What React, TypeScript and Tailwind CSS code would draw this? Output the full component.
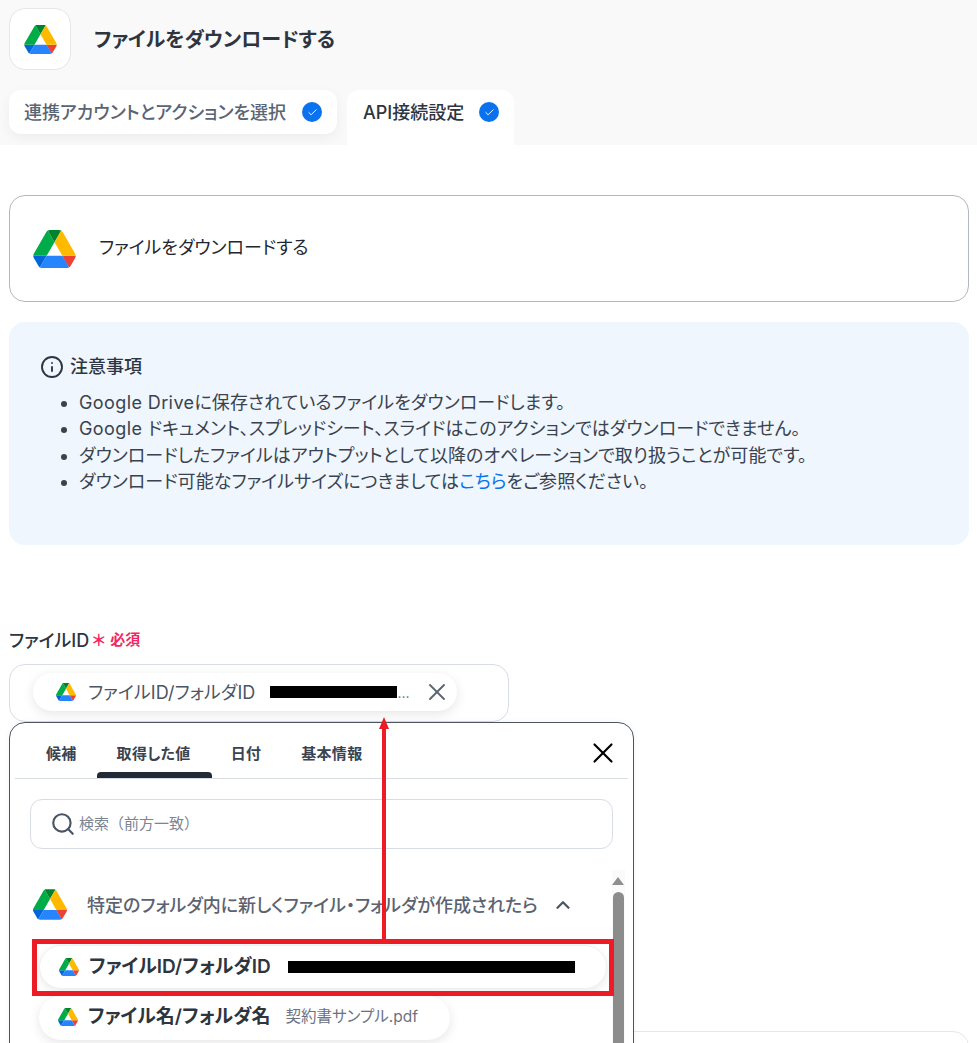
import { Check, ChevronUp, Info, Search, X } from 'lucide-react';

const FONT = "font-['Inter','Noto_Sans_CJK_JP',sans-serif] [font-feature-settings:'palt']";

function DriveIcon({ className }: { className: string }) {
  return (
    <svg viewBox="0 0 87.3 78" className={className}>
      <path d="m6.6 66.85 3.85 6.65c.8 1.4 1.95 2.5 3.3 3.3l13.75-23.8h-27.5c0 1.55.4 3.1 1.2 4.5z" fill="#0066da" />
      <path d="m43.65 25-13.75-23.8c-1.35.8-2.5 1.9-3.3 3.3l-25.4 44a9.06 9.06 0 0 0 -1.2 4.5h27.5z" fill="#00ac47" />
      <path d="m73.55 76.8c1.35-.8 2.5-1.9 3.3-3.3l1.6-2.75 7.65-13.25c.8-1.4 1.2-2.95 1.2-4.5h-27.502l5.852 11.5z" fill="#ea4335" />
      <path d="m43.65 25 13.75-23.8c-1.35-.8-2.9-1.2-4.5-1.2h-18.5c-1.6 0-3.15.45-4.5 1.2z" fill="#00832d" />
      <path d="m59.8 53h-32.3l-13.75 23.8c1.35.8 2.9 1.2 4.5 1.2h50.8c1.6 0 3.15-.45 4.5-1.2z" fill="#2684fc" />
      <path d="m73.4 26.5-12.7-22c-.8-1.4-1.95-2.5-3.3-3.3l-13.75 23.8 16.15 28h27.45c0-1.55-.4-3.1-1.2-4.5z" fill="#ffba00" />
    </svg>
  );
}

function DoneBadge() {
  return (
    <span className="flex h-5 w-5 items-center justify-center rounded-full bg-[#0a72ee]">
      <Check size={11} strokeWidth={2} className="text-white" />
    </span>
  );
}

export default function App() {
  return (
    <div className={`relative h-[1043px] w-[977px] overflow-hidden bg-white ${FONT} text-[#2d3540]`}>
      {/* Header */}
      <header className="h-[145px] bg-[#f9f9f9] pl-[9px] pt-2">
        <div className="flex items-center gap-[23px]">
          <div className="flex h-[62px] w-[62px] items-center justify-center rounded-2xl border border-[#e6e6e6] bg-white">
            <DriveIcon className="h-[29px] w-[33px]" />
          </div>
          <h1 className="pt-[1px] text-[20px] font-semibold">ファイルをダウンロードする</h1>
        </div>
        <div className="mt-5 flex items-start gap-2.5">
          <div className="flex h-11 w-[328px] items-center gap-[16px] rounded-xl bg-white pl-[15px] text-[18px] font-medium text-[#5a6472] shadow-[0_4px_12px_rgba(0,0,0,0.05)]">
            連携アカウントとアクションを選択
            <DoneBadge />
          </div>
          <div className="h-[55px] w-[167px] rounded-t-xl bg-white pl-4 text-[18px] font-medium">
            <div className="flex h-11 items-center gap-[15px]">
              API接続設定
              <DoneBadge />
            </div>
          </div>
        </div>
      </header>

      <main className="px-[9px]">
        <section className="mt-[50px] flex h-[107px] w-[960px] items-center gap-[23px] rounded-2xl border border-[#b3b8be] pl-[23px]">
          <DriveIcon className="h-[38px] w-[43px]" />
          <span className="pb-[2px] text-[18px] font-normal text-[#1f2730]">ファイルをダウンロードする</span>
        </section>

        <section className="mt-5 h-[223px] w-[960px] rounded-2xl bg-[#eff6fe] pl-[31px] pt-[31px]">
          <div className="flex items-center gap-[6px] text-[18px] font-medium">
            <Info size={24} strokeWidth={1.9} />
            注意事項
          </div>
          <ul className="ml-[2px] mt-[10px] list-disc pl-[37px] text-[18px] leading-[26.3px] tracking-[0.07px] text-[#3a424d]">
            <li>
              <span className="tracking-[0.4px]">Google Drive</span>に保存されているファイルをダウンロードします。
            </li>
            <li>
              <span className="tracking-[0.4px]">Google </span>ドキュメント、スプレッドシート、スライドはこのアクションではダウンロードできません。
            </li>
            <li>ダウンロードしたファイルはアウトプットとして以降のオペレーションで取り扱うことが可能です。</li>
            <li>
              ダウンロード可能なファイルサイズにつきましては<span className="text-[#0a72ee]">こちら</span>をご参照ください。
            </li>
          </ul>
        </section>

        <section className="mt-[83px]">
          <div className="flex h-6 items-center text-[18px] font-medium">
            ファイルID
            <span className="ml-[3px] text-[16px] font-bold leading-none text-[#f0285f]">＊</span>
            <span className="ml-[5px] text-[15px] font-semibold text-[#f0285f]">必須</span>
          </div>
          <div className="mt-[12px] flex h-[58px] w-[500px] items-center rounded-2xl border border-[#d8dde5] pb-[2px] pl-[23px]">
            <div className="flex h-[38px] w-[424px] items-center rounded-full bg-white pl-[23px] shadow-[0_3px_12px_rgba(0,0,0,0.1)]">
              <DriveIcon className="h-[18px] w-[20px]" />
              <span className="ml-[12px] text-[18px] tracking-[0.1px] text-[#4b5563]">ファイルID/フォルダID</span>
              <span className="ml-[15px] h-3 w-[127px] bg-black" />
              <span className="text-[14px] text-[#6b7280]">...</span>
              <X size={28} strokeWidth={1.6} className="ml-[13px] text-[#5b6573]" />
            </div>
          </div>
        </section>

        {/* Next field, mostly hidden behind the picker */}
        <div className="mt-[309px] h-[100px] w-[960px] rounded-2xl border border-[#e5e7eb]" />
      </main>

      {/* Value picker */}
      <div className="absolute left-[9px] top-[722px] h-[400px] w-[625px] rounded-2xl border border-[#4b5563] bg-white px-[5px] shadow-[0_0_6px_rgba(0,0,0,0.05)]">
        <div className="relative flex h-[56px] items-center border-b border-[#d8dde5] pt-[7px] text-[15px] font-semibold tracking-[0.3px] text-[#3a4350]">
          <span className="ml-[31px]">候補</span>
          <span className="ml-[40px]">取得した値</span>
          <span className="ml-[40px]">日付</span>
          <span className="ml-[40px]">基本情報</span>
          <span className="absolute bottom-0 left-[82px] h-[6px] w-[115px] rounded-t bg-[#222a35]" />
          <X size={34} strokeWidth={1.5} className="absolute right-[8px] top-[13px] text-black" />
        </div>

        <div className="mx-[15px] mt-5 flex h-[50px] w-[583px] items-center rounded-xl border border-[#d8dde5] pl-[19px] text-[15px] text-[#7b8490] [font-feature-settings:normal]">
          <Search size={26} strokeWidth={2} className="text-[#4b5563]" />
          <span className="ml-[3px] pt-[1px]">検索（前方一致）</span>
        </div>

        <div className="relative mt-[40px] flex items-center pl-[18px]">
          <DriveIcon className="h-[31px] w-[34px]" />
          <span className="ml-[20px] pt-[1px] text-[18px] font-medium text-[#5b6370]">特定のフォルダ内に新しくファイル・フォルダが作成されたら</span>
          <ChevronUp size={22} strokeWidth={2.5} className="ml-[14px] text-[#4b5563]" />
        </div>

        <div className="ml-[24px] mt-[25px] flex h-[44px] w-[568px] items-center rounded-full border border-[#f0f0f0] bg-white pl-[19px] shadow-[0_3px_10px_rgba(0,0,0,0.08)]">
          <DriveIcon className="h-[18px] w-[20px]" />
          <span className="ml-[10px] text-[19px] font-semibold">ファイルID/フォルダID</span>
          <span className="ml-[17px] h-[12px] w-[287px] bg-black" />
        </div>
        <div className="ml-[24px] mt-[7px] flex h-[44px] w-[411px] items-center rounded-full bg-white pb-[2px] pl-[19px] shadow-[0_3px_12px_rgba(0,0,0,0.1)]">
          <DriveIcon className="h-[18px] w-[20px]" />
          <span className="ml-[10px] text-[19px] font-semibold">ファイル名/フォルダ名</span>
          <span className="ml-[15px] text-[15.5px] text-[#6b7280]">契約書サンプル.pdf</span>
        </div>

        {/* Scrollbar */}
        <div className="absolute left-[602px] top-[147px] h-[260px] w-[13px] bg-[#fafafa]">
          <span className="absolute left-0 top-[7px] h-0 w-0 border-x-[6.5px] border-b-[8px] border-x-transparent border-b-[#8f8f8f]" />
          <span className="absolute left-[1px] top-[22px] h-[240px] w-[11px] rounded-full bg-[#8c8c8c]" />
        </div>
      </div>

      {/* Annotation */}
      <div className="absolute left-[32px] top-[939px] h-[57px] w-[582px] border-[5px] border-[#ed1c24]" />
      <div className="absolute left-[382px] top-[728px] h-[212px] w-[4px] bg-[#ed1c24]" />
      <span className="absolute left-[379px] top-[717px] h-0 w-0 border-x-[5.5px] border-b-[12px] border-x-transparent border-b-[#ed1c24]" />
    </div>
  );
}
